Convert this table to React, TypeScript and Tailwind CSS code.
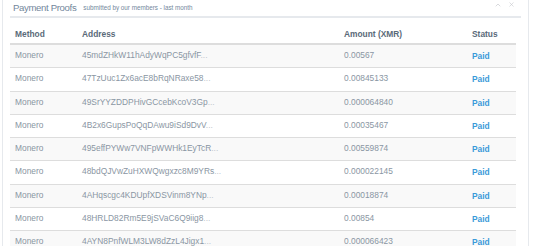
import { ChevronUp, X } from "lucide-react";

const rows = [
  { address: "45mdZHkW11hAdyWqPC5gfvfF", amount: "0.00567" },
  { address: "47TzUuc1Zx6acE8bRqNRaxe58", amount: "0.00845133" },
  { address: "49SrYYZDDPHivGCcebKcoV3Gp", amount: "0.000064840" },
  { address: "4B2x6GupsPoQqDAwu9iSd9DvV", amount: "0.00035467" },
  { address: "495effPYWw7VNFpWWHk1EyTcR", amount: "0.00559874" },
  { address: "48bdQJVwZuHXWQwgxzc8M9YRs", amount: "0.000022145" },
  { address: "4AHqscgc4KDUpfXDSVinm8YNp", amount: "0.00018874" },
  { address: "48HRLD82Rm5E9jSVaC6Q9iig8", amount: "0.00854" },
  { address: "4AYN8PnfWLM3LW8dZzL4Jigx1", amount: "0.000066423" },
];

export default function App() {
  return (
    <div className="h-[246px] w-[540px] overflow-hidden bg-white font-['Liberation_Sans',Arial,sans-serif] text-[#73879C]">
      <div className="ml-[2px] h-full w-[527px] border-x border-[#E6E9ED] px-[7px]">
        {/* panel title */}
        <div className="flex h-[18px] items-center border-b-2 border-[#E6E9ED] pl-[3px] pr-[6px]">
          <h2 className="text-[9.6px] leading-none tracking-[-0.35px] text-[#73879C]">Payment Proofs</h2>
          <span className="ml-[7px] mt-[1px] text-[6.3px] leading-none text-[#73879C]">
            submitted by our members - last month
          </span>
          <div className="mb-[7px] ml-auto flex items-center gap-[6px] text-[#C5C7CB]">
            <ChevronUp size={8} strokeWidth={2} />
            <X size={7} strokeWidth={2} />
          </div>
        </div>

        <table className="mt-[4px] w-[506px] table-fixed border-collapse text-[8.4px] leading-[12px]">
          <colgroup>
            <col className="w-[67px]" />
            <col className="w-[262px]" />
            <col className="w-[128px]" />
            <col />
          </colgroup>
          <thead>
            <tr className="border-b-2 border-[#DDDDDD] text-left font-bold text-[#5A6A79]">
              <th className="px-[5px] pb-[3px] pt-[6px]">Method</th>
              <th className="px-[5px] pb-[3px] pt-[6px]">Address</th>
              <th className="px-[5px] pb-[3px] pt-[6px]">Amount (XMR)</th>
              <th className="px-[5px] pb-[3px] pt-[6px]">Status</th>
            </tr>
          </thead>
          <tbody>
            {rows.map((r, i) => (
              <tr
                key={r.address}
                className={`border-t border-[#DDDDDD] ${i % 2 === 0 ? "bg-[#F9F9F9]" : "bg-white"}`}
              >
                <td className="px-[5px] pb-[6.3px] pt-[4px] text-[#8A96A3]">Monero</td>
                <td className="px-[5px] pb-[6.3px] pt-[4px] text-[#8A96A3]">
                  {r.address}
                  <span className="text-[#C0C6CC]">...</span>
                </td>
                <td className="px-[5px] pb-[6.3px] pt-[4px] text-[#8A96A3]">{r.amount}</td>
                <td className="px-[5px] pb-[6.3px] pt-[4px]">
                  <span className="relative top-[1px] font-bold text-[#3A9AD9]">Paid</span>
                </td>
              </tr>
            ))}
          </tbody>
        </table>
      </div>
    </div>
  );
}
